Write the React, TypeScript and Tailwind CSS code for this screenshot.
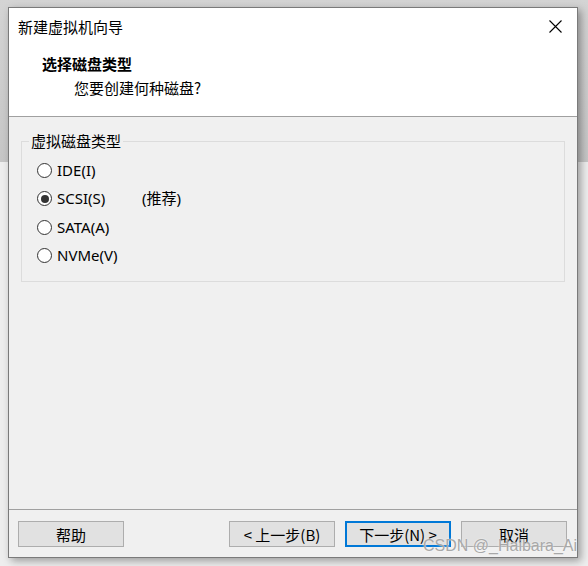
import React from "react";

const cjk = "font-['Noto_Sans_CJK_SC','Noto_Sans',sans-serif]";
const latin = "font-['Noto_Sans','Noto_Sans_CJK_SC',sans-serif]";

const options = [
  { label: "IDE(I)", checked: false },
  { label: "SCSI(S)", checked: true, note: "(推荐)" },
  { label: "SATA(A)", checked: false },
  { label: "NVMe(V)", checked: false },
];

const Radio: React.FC<{ checked: boolean }> = ({ checked }) => (
  <span className="w-[15px] h-[15px] rounded-full border border-[#333333] bg-white flex items-center justify-center shrink-0">
    {checked && <span className="w-[8px] h-[8px] rounded-full bg-[#333333]" />}
  </span>
);

const WizButton: React.FC<{ children: React.ReactNode; primary?: boolean }> = ({ children, primary }) => (
  <button
    className={
      "w-[106px] h-[26px] bg-[#e1e1e1] text-[15px] leading-none text-black flex items-center justify-center " +
      (primary ? "border-2 border-[#0078d7]" : "border border-[#adadad]")
    }
  >
    {children}
  </button>
);

export default function App() {
  const [disk, setDisk] = React.useState("SCSI(S)");

  return (
    <div
      className={
        "relative w-[588px] h-[566px] overflow-hidden pl-[8px] pt-[7px] bg-[linear-gradient(to_bottom,#d4d4d4_0,#c6c6c6_162px,#eeeeee_162px,#eeeeee_100%)] " +
        cjk
      }
    >
      <div className="w-[570px] h-[551px] border border-[#7a7a7a] bg-[#f0f0f0] flex flex-col shadow-[3px_3px_8px_rgba(0,0,0,0.35)]">
        {/* header */}
        <div className="h-[109px] bg-white border-b border-[#a0a0a0] flex flex-col">
          <div className="h-[37px] flex items-center justify-between pl-[9px] pr-[15px]">
            <span className="text-[15px] leading-none text-black">新建虚拟机向导</span>
            <svg width="13" height="13" viewBox="0 0 13 13" className="text-black">
              <path d="M0.5 0.5 L12.5 12.5 M12.5 0.5 L0.5 12.5" stroke="currentColor" strokeWidth="1.1" />
            </svg>
          </div>
          <div className="mt-[8px] pl-[33px] h-[20px] flex items-center text-[15px] font-bold leading-none text-black">
            选择磁盘类型
          </div>
          <div className="mt-[4px] pl-[65px] h-[20px] flex items-center text-[15px] leading-none text-black">
            您要创建何种磁盘?
          </div>
        </div>

        {/* body */}
        <div className="flex-1 pt-[14px] pl-[12px] pr-[12px]">
          <fieldset className="border border-[#dcdcdc] h-[151px] pl-[15px] pr-[10px] pb-[12px]">
            <legend className="-ml-[8px] px-[2px] text-[15px] leading-[20px] text-black">虚拟磁盘类型</legend>
            <div className="pt-[5px] flex flex-col">
              {options.map((o) => (
                <label
                  key={o.label}
                  className={"h-[28.5px] flex items-center gap-[5px] text-[15px] leading-none text-black " + latin}
                  onClick={() => setDisk(o.label)}
                >
                  <Radio checked={disk === o.label} />
                  <span className="w-[80px]">{o.label}</span>
                  {o.note && <span>{o.note}</span>}
                </label>
              ))}
            </div>
          </fieldset>
        </div>

        {/* footer */}
        <div className="border-t border-[#a0a0a0] pt-[11px] pb-[10px] pl-[9px] pr-[10px] flex items-center">
          <WizButton>帮助</WizButton>
          <div className="flex-1" />
          <div className="flex gap-[10px]">
            <WizButton>&lt; 上一步(B)</WizButton>
            <WizButton primary>下一步(N) &gt;</WizButton>
            <WizButton>取消</WizButton>
          </div>
        </div>
      </div>

      <div className="absolute left-[423px] top-[535px] text-[16px] leading-[22px] text-[#a8a8a8] font-['Liberation_Sans',sans-serif] [text-shadow:0_0_2px_rgba(255,255,255,0.8)]">
        CSDN @_Haibara_Ai
      </div>
    </div>
  );
}
